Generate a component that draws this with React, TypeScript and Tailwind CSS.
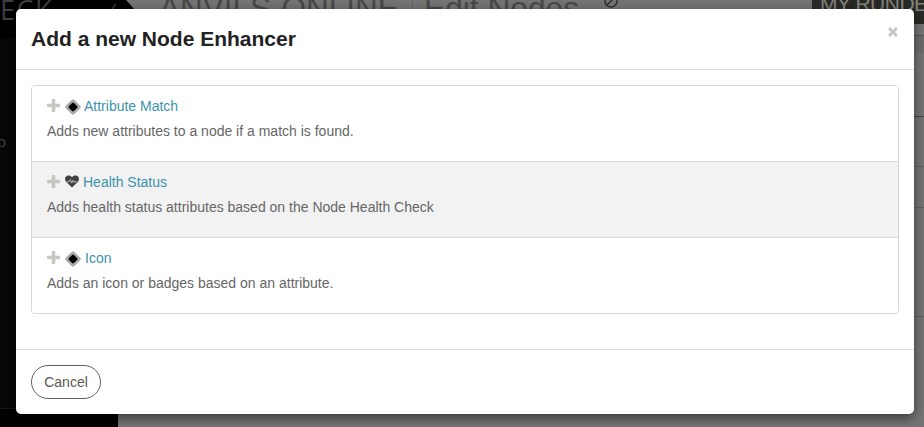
import React from "react";

const FONT = "font-['Liberation_Sans',Arial,sans-serif]";

function Plus() {
  return (
    <svg className="-mt-[2px] h-[13px] w-[13px] shrink-0" viewBox="0 0 13 13" fill="#c6c7c0">
      <path d="M5.500 0h2q.8 0 .8.8v3.900h3.900q.8 0 .8.8v2q0 .8-.8.8H8.300v3.900q0 .8-.8.8h-2q-.8 0-.8-.8V8.300H.8Q0 8.300 0 7.500v-2q0-.8.8-.8h3.900V.8q0-.8.8-.8z" />
    </svg>
  );
}

function Diamond() {
  return (
    <svg className="mt-px h-4 w-4 shrink-0" viewBox="0 0 16 16">
      <rect x="2" y="2" width="12" height="12" rx="2" transform="rotate(45 8 8)" fill="#aaaaaa" />
      <rect x="4.500" y="4.500" width="7" height="7" rx="1.300" transform="rotate(45 8 8)" fill="#000" />
    </svg>
  );
}

function Heart() {
  return (
    <svg className="-mt-px h-[13px] w-[14px] shrink-0" viewBox="0 0 14 13">
      <path d="M7 12.5 1.2 7C-.3 5.400-.3 3 .8 1.700 2.200.1 5.300 0 7 2.300 8.700 0 11.800.1 13.200 1.700 14.300 3 14.300 5.400 12.800 7z" fill="#444" />
      <path d="M1.500 6.800h2.700l1.100-2.300 1.500 3.600 1.300-2.800.9 1.500h3.200" fill="none" stroke="#d5d5d5" strokeWidth="0.8" />
    </svg>
  );
}

const rows = [
  { title: "Attribute Match", text: "Adds new attributes to a node if a match is found.", icon: <Diamond />, iconGap: "ml-[5px] mr-[3px]", bg: "bg-white" },
  { title: "Health Status", text: "Adds health status attributes based on the Node Health Check", icon: <Heart />, iconGap: "ml-[5px] mr-1", bg: "bg-[#f2f2f2]" },
  { title: "Icon", text: "Adds an icon or badges based on an attribute.", icon: <Diamond />, iconGap: "ml-[5px] mr-1", bg: "bg-white" },
];

function Backdrop() {
  return (
    <div className="flex h-full w-full">
      <div className="h-full w-[118px] shrink-0 overflow-hidden bg-[#070707]">
        <div className="flex h-[38px] justify-between bg-black font-['Open_Sans',sans-serif] text-[27px] leading-[19px] text-[#3f3f3f]">
          <span className="tracking-[1.500px]">ECK</span>
          <svg className="mt-[3px] h-2 w-[7px]" viewBox="0 0 7 8" fill="none" stroke="#666">
            <path d="M5 1 0 7" />
          </svg>
        </div>
        <div className="h-[370px] pt-[93px] font-['Open_Sans',sans-serif] text-[15px] leading-5 text-[#444]">
          <span className="-ml-[3px]">p</span>
        </div>
        <div className="h-[19px] border-t border-[#171717] bg-[#020202]" />
      </div>
      <div className="min-w-0 flex-1 bg-[#747474]">
        <div className="flex h-9 items-start overflow-hidden border-b border-[#555] whitespace-nowrap">
          <svg className="h-9 w-[18px] shrink-0" viewBox="0 0 18 36">
            <path d="M0 0h8l10 11v25H0z" fill="#000" />
          </svg>
          <div className="ml-[23px] flex text-[31.500px] leading-9 text-[#484848]">
            <span className="-mt-[10px] w-[253px]">ANVILS-ONLINE</span>
            <span className="h-6 w-px bg-[#656565]" />
            <span className="-mt-[10px] ml-[11px] w-[179px] text-[31.700px]">Edit Nodes</span>
          </div>
          <svg className="-mt-[6px] ml-px h-[14px] w-[14px] shrink-0" viewBox="0 0 14 14" fill="none" stroke="#303030" strokeWidth="1.500">
            <circle cx="7" cy="7" r="6" />
            <path d="m3 11 8-8" />
          </svg>
          <div className="ml-auto h-6 w-[112px] shrink-0 overflow-hidden bg-[#292925] pl-2 text-[21px] leading-6 text-[#85857e]">
            <span className="-mt-[8px] block tracking-[-0.500px]">MY RUNDECK</span>
          </div>
        </div>
        <div className="h-[17px] bg-[#6b6b6b]" />
        <div className="h-[63px]" />
        <div className="h-[50px] border-t border-[#464646]" />
        <div className="h-[41px] border-t border-[#616161]" />
        <div className="h-[109px] border-t border-[#616161]" />
        <div className="border-t border-[#616161]" />
      </div>
    </div>
  );
}

export default function App() {
  return (
    <div className={`relative h-[427px] w-[924px] overflow-hidden ${FONT}`}>
      <Backdrop />
      <div role="dialog" className="absolute left-4 top-[9px] flex h-[405px] w-[898px] flex-col rounded-[5px] bg-white shadow-[0_4px_12px_rgba(0,0,0,0.5)]">
        <div className="flex h-[61px] shrink-0 items-start justify-between border-b border-[#dcdcdc] pl-[15px] pr-4">
          <h4 className="mt-[17px] text-[21px] font-bold leading-[26px] text-[#222]">Add a new Node Enhancer</h4>
          <button aria-label="Close" className="mt-[18px]">
            <svg className="h-[10px] w-[10px]" viewBox="0 0 10 10" stroke="#c8c8c8" strokeWidth="3">
              <path d="m1 1 8 8M9 1 1 9" />
            </svg>
          </button>
        </div>
        <div className="h-[279px] px-[15px] pt-[15px]">
          <div className="overflow-hidden rounded-[4px] border border-[#d8d8d8]">
            {rows.map((r, i) => (
              <div key={r.title} className={`px-[15px] pt-[10px] ${r.bg} ${i ? "h-[76px] border-t border-[#d8d8d8]" : "h-[75px]"}`}>
                <div className="flex h-5 items-center">
                  <Plus />
                  <span className={r.iconGap}>{r.icon}</span>
                  <a className="text-[14px] leading-5 text-[#3c93ad]">{r.title}</a>
                </div>
                <p className="mt-[5px] text-[14px] leading-5 text-[#666]">{r.text}</p>
              </div>
            ))}
          </div>
        </div>
        <div className="flex-1 border-t border-[#dcdcdc] px-[15px] pt-[15px]">
          <button className="h-[34px] w-[70px] rounded-full border border-[#66615b] text-[14px] leading-5 text-[#5c5751]">Cancel</button>
        </div>
      </div>
    </div>
  );
}
